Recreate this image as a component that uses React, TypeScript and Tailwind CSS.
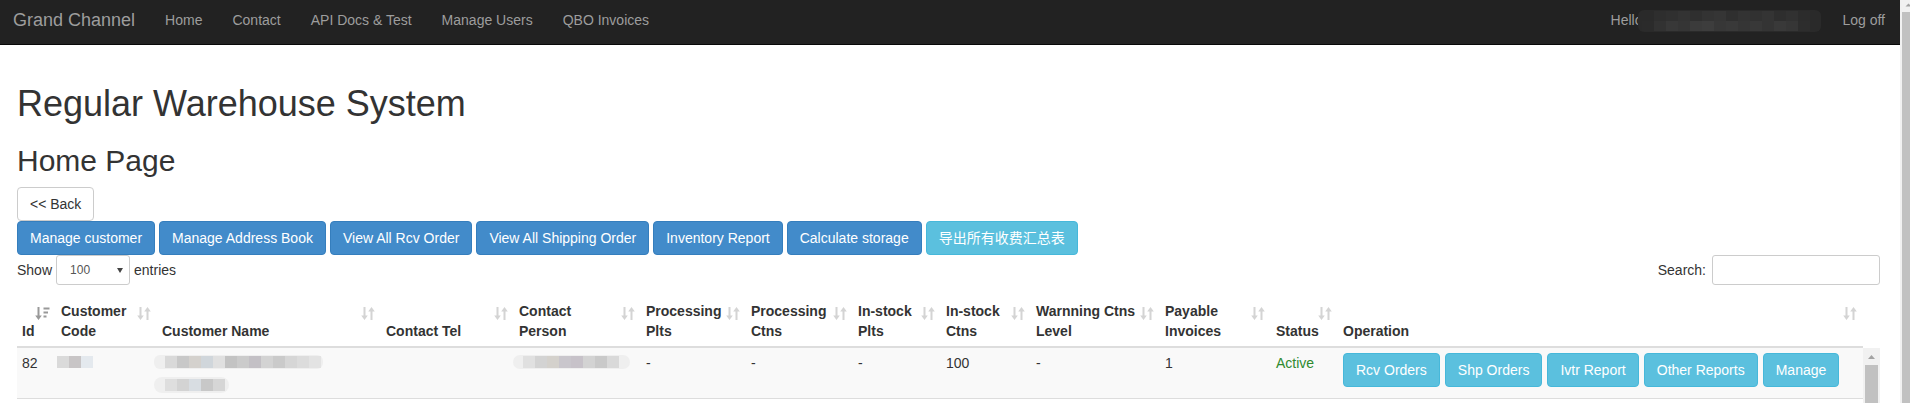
import React from "react";

const navLinks = ["Home", "Contact", "API Docs & Test", "Manage Users", "QBO Invoices"];

const topButtons: { label: string; info: boolean }[] = [
  { label: "Manage customer", info: false },
  { label: "Manage Address Book", info: false },
  { label: "View All Rcv Order", info: false },
  { label: "View All Shipping Order", info: false },
  { label: "Inventory Report", info: false },
  { label: "Calculate storage", info: false },
  { label: "导出所有收费汇总表", info: true },
];

const opButtons = ["Rcv Orders", "Shp Orders", "Ivtr Report", "Other Reports", "Manage"];

const primaryBtn =
  "h-[34px] px-[12px] rounded-[4px] border border-[#357ebd] bg-[#428bca] text-white whitespace-nowrap leading-[20px]";
const infoBtn =
  "h-[34px] px-[12px] rounded-[4px] border border-[#46b8da] bg-[#5bc0de] text-white whitespace-nowrap leading-[20px]";

function SortIcon() {
  return (
    <svg width="14" height="13" viewBox="0 0 14 13" className="absolute top-[11px] right-[6px]">
      <path d="M2.5 0h2v8.5h2.3L3.5 13 0.2 8.5h2.3z" fill="#d4d4d4" />
      <path d="M9.5 13h2V4.5h2.3L10.5 0 7.2 4.5h2.3z" fill="#d4d4d4" />
    </svg>
  );
}

function SortAscIcon() {
  return (
    <svg width="15" height="13" viewBox="0 0 15 13" className="absolute top-[11px] right-[6px]">
      <path d="M2.5 0h2v8.5h2.3L3.5 13 0.2 8.5h2.3z" fill="#999" />
      <rect x="8.5" y="0.5" width="6" height="2" fill="#999" />
      <rect x="8.5" y="4.5" width="4.5" height="2" fill="#999" />
      <rect x="8.5" y="8.5" width="3" height="2" fill="#999" />
    </svg>
  );
}

function Blocks({ cls, h = "h-[12px]" }: { cls: string[]; h?: string }) {
  return (
    <div className="flex">
      {cls.map((c, i) => (
        <div key={i} className={"w-[12px] " + h + " " + c} />
      ))}
    </div>
  );
}

const navBlurTop = [
  "bg-[#2a2a2a]", "bg-[#2e2e2e]", "bg-[#303030]", "bg-[#333333]", "bg-[#2f2f2f]", "bg-[#333333]",
  "bg-[#353535]", "bg-[#2f2f2f]", "bg-[#333333]", "bg-[#313131]", "bg-[#343434]", "bg-[#2e2e2e]",
  "bg-[#313131]", "bg-[#2c2c2c]", "bg-[#2a2a2a]",
];
const navBlurBottom = [
  "bg-[#2b2b2b]", "bg-[#323232]", "bg-[#383838]", "bg-[#353535]", "bg-[#3b3b3b]", "bg-[#3d3d3d]",
  "bg-[#373737]", "bg-[#393939]", "bg-[#353535]", "bg-[#383838]", "bg-[#343434]", "bg-[#393939]",
  "bg-[#363636]", "bg-[#2d2d2d]", "bg-[#2a2a2a]",
];

export default function App() {
  return (
    <div className="flex w-[1910px] h-[403px] overflow-hidden bg-white font-['Liberation_Sans','Noto_Sans_CJK_SC',sans-serif] text-[14px] leading-[20px] text-[#333]">
      <div className="w-[1900px] flex-none flex flex-col">
        {/* Navbar */}
        <nav className="h-[45px] flex-none bg-[#222] border-b border-[#080808] flex justify-between">
          <div className="flex items-start">
            <a className="pl-[13px] pr-[15px] pt-[10px] text-[18px] leading-[20px] text-[#9d9d9d]">Grand Channel</a>
            {navLinks.map((l) => (
              <a key={l} className="px-[15px] pt-[10px] text-[#9d9d9d]">
                {l}
              </a>
            ))}
          </div>
          <div className="flex items-start">
            <div className="flex items-start pt-[10px] text-[#9d9d9d]">
              <span>Hello</span>
              <div className="ml-[-4px] mr-[6px] w-[183px] h-[22px] rounded-[6px] bg-[#2a2a2a] flex flex-col justify-center pl-[4px] overflow-hidden">
                <Blocks cls={navBlurTop} h="h-[10px]" />
                <Blocks cls={navBlurBottom} h="h-[10px]" />
              </div>
            </div>
            <a className="px-[15px] pt-[10px] text-[#9d9d9d]">Log off</a>
          </div>
        </nav>

        {/* Main */}
        <main className="pl-[17px] pr-[20px] pt-[39px]">
          <h1 className="text-[36px] leading-[40px] font-normal">Regular Warehouse System</h1>
          <h2 className="mt-[20px] text-[30px] leading-[33px] font-normal">Home Page</h2>
          <div className="mt-[10px] flex">
            <button className="h-[34px] px-[12px] rounded-[4px] border border-[#ccc] bg-white text-[#333] leading-[20px]">
              &lt;&lt; Back
            </button>
          </div>
          <div className="flex gap-[4px]">
            {topButtons.map((b) => (
              <button key={b.label} className={b.info ? infoBtn : primaryBtn}>
                {b.label}
              </button>
            ))}
          </div>
          <div className="flex justify-between items-center h-[30px]">
            <div className="flex items-center">
              <span>Show</span>
              <div className="mx-[4px] w-[74px] h-[30px] border border-[#ccc] rounded-[3px] bg-white flex items-center justify-between pl-[13px] pr-[6px] text-[12px] text-[#555]">
                <span>100</span>
                <svg width="6" height="5" viewBox="0 0 6 5">
                  <path d="M0 0h6L3 5z" fill="#444" />
                </svg>
              </div>
              <span>entries</span>
            </div>
            <div className="flex items-center">
              <span>Search:</span>
              <div className="ml-[6px] w-[168px] h-[30px] border border-[#ccc] rounded-[3px] bg-white" />
            </div>
          </div>

          {/* Table head */}
          <div className="mt-[11px] w-[1863px]">
            <table className="table-fixed border-collapse w-[1846px]">
              <colgroup>
                <col className="w-[39px]" />
                <col className="w-[101px]" />
                <col className="w-[224px]" />
                <col className="w-[133px]" />
                <col className="w-[127px]" />
                <col className="w-[105px]" />
                <col className="w-[107px]" />
                <col className="w-[88px]" />
                <col className="w-[90px]" />
                <col className="w-[129px]" />
                <col className="w-[111px]" />
                <col className="w-[67px]" />
                <col className="w-[525px]" />
              </colgroup>
              <thead>
                <tr>
                  <th className="relative h-[50px] p-[5px] text-left align-bottom font-bold whitespace-nowrap border-b-2 border-[#ddd]">
                    Id
                    <SortAscIcon />
                  </th>
                  <th className="relative p-[5px] text-left align-bottom font-bold whitespace-nowrap border-b-2 border-[#ddd]">
                    Customer
                    <br />
                    Code
                    <SortIcon />
                  </th>
                  <th className="relative p-[5px] text-left align-bottom font-bold whitespace-nowrap border-b-2 border-[#ddd]">
                    Customer Name
                    <SortIcon />
                  </th>
                  <th className="relative p-[5px] text-left align-bottom font-bold whitespace-nowrap border-b-2 border-[#ddd]">
                    Contact Tel
                    <SortIcon />
                  </th>
                  <th className="relative p-[5px] text-left align-bottom font-bold whitespace-nowrap border-b-2 border-[#ddd]">
                    Contact
                    <br />
                    Person
                    <SortIcon />
                  </th>
                  <th className="relative p-[5px] text-left align-bottom font-bold whitespace-nowrap border-b-2 border-[#ddd]">
                    Processing
                    <br />
                    Plts
                    <SortIcon />
                  </th>
                  <th className="relative p-[5px] text-left align-bottom font-bold whitespace-nowrap border-b-2 border-[#ddd]">
                    Processing
                    <br />
                    Ctns
                    <SortIcon />
                  </th>
                  <th className="relative p-[5px] text-left align-bottom font-bold whitespace-nowrap border-b-2 border-[#ddd]">
                    In-stock
                    <br />
                    Plts
                    <SortIcon />
                  </th>
                  <th className="relative p-[5px] text-left align-bottom font-bold whitespace-nowrap border-b-2 border-[#ddd]">
                    In-stock
                    <br />
                    Ctns
                    <SortIcon />
                  </th>
                  <th className="relative p-[5px] text-left align-bottom font-bold whitespace-nowrap border-b-2 border-[#ddd]">
                    Warnning Ctns
                    <br />
                    Level
                    <SortIcon />
                  </th>
                  <th className="relative p-[5px] text-left align-bottom font-bold whitespace-nowrap border-b-2 border-[#ddd]">
                    Payable
                    <br />
                    Invoices
                    <SortIcon />
                  </th>
                  <th className="relative p-[5px] text-left align-bottom font-bold whitespace-nowrap border-b-2 border-[#ddd]">
                    Status
                    <SortIcon />
                  </th>
                  <th className="relative p-[5px] text-left align-bottom font-bold whitespace-nowrap border-b-2 border-[#ddd]">
                    Operation
                    <SortIcon />
                  </th>
                </tr>
              </thead>
            </table>
          </div>

          {/* Table body with scrollbar */}
          <div className="flex w-[1863px] h-[80px]">
            <div className="w-[1846px] flex-none">
              <table className="table-fixed border-collapse w-[1846px]">
                <colgroup>
                  <col className="w-[39px]" />
                  <col className="w-[101px]" />
                  <col className="w-[224px]" />
                  <col className="w-[133px]" />
                  <col className="w-[127px]" />
                  <col className="w-[105px]" />
                  <col className="w-[107px]" />
                  <col className="w-[88px]" />
                  <col className="w-[90px]" />
                  <col className="w-[129px]" />
                  <col className="w-[111px]" />
                  <col className="w-[67px]" />
                  <col className="w-[525px]" />
                </colgroup>
                <tbody>
                  <tr className="bg-[#f9f9f9] border-b border-[#ddd]">
                    <td className="p-[5px] align-top">82</td>
                    <td className="p-[5px] align-top">
                      <div className="ml-[-4px] mt-[3px] flex w-fit rounded-[4px] bg-[#eeeeee]">
                        <Blocks cls={["bg-[#dadada]", "bg-[#c8c5c6]", "bg-[#e4e9ee]"]} />
                      </div>
                    </td>
                    <td className="p-[5px] align-top">
                      <div className="ml-[-8px] h-[40px] flex flex-col">
                        <div className="mt-[2px] w-fit pl-[11px] pr-[2px] py-[1px] rounded-[6px] bg-[#efefef]">
                          <Blocks
                            cls={[
                              "bg-[#d9d9d9]", "bg-[#c8c8c8]", "bg-[#d4d1cd]", "bg-[#d0d6db]", "bg-[#e0e0e0]",
                              "bg-[#c3c3c3]", "bg-[#cbcbcb]", "bg-[#c3c0c5]", "bg-[#d3d3d3]", "bg-[#cacaca]",
                              "bg-[#d6d6d6]", "bg-[#dcdcdc]", "bg-[#e3e3e3]",
                            ]}
                          />
                        </div>
                        <div className="mt-[8px] w-fit pl-[11px] pr-[4px] py-[2px] rounded-[8px] bg-[#efefef]">
                          <Blocks cls={["bg-[#dedede]", "bg-[#d3d3d3]", "bg-[#d8dde2]", "bg-[#c8c8c8]", "bg-[#d6d6d6]"]} />
                        </div>
                      </div>
                    </td>
                    <td className="p-[5px] align-top"></td>
                    <td className="p-[5px] align-top">
                      <div className="ml-[-6px] mt-[2px] w-fit pl-[10px] pr-[11px] py-[1px] rounded-[7px] bg-[#efefef]">
                        <Blocks
                          cls={[
                            "bg-[#e0e0e0]", "bg-[#d3d3d3]", "bg-[#d4d1cc]", "bg-[#c9c6cc]",
                            "bg-[#c7c2c9]", "bg-[#d3d3d3]", "bg-[#c9c9c9]", "bg-[#d9d9d9]",
                          ]}
                        />
                      </div>
                    </td>
                    <td className="p-[5px] align-top">-</td>
                    <td className="p-[5px] align-top">-</td>
                    <td className="p-[5px] align-top">-</td>
                    <td className="p-[5px] align-top">100</td>
                    <td className="p-[5px] align-top">-</td>
                    <td className="p-[5px] align-top">1</td>
                    <td className="p-[5px] align-top text-[#2f8a2f]">Active</td>
                    <td className="p-[5px] align-top">
                      <div className="flex gap-[5px]">
                        {opButtons.map((b) => (
                          <button key={b} className={infoBtn}>
                            {b}
                          </button>
                        ))}
                      </div>
                    </td>
                  </tr>
                </tbody>
              </table>
            </div>
            <div className="w-[17px] flex-none bg-[#f1f1f1] flex flex-col items-center">
              <div className="h-[17px] w-[17px] flex items-center justify-center">
                <svg width="7" height="4" viewBox="0 0 7 4">
                  <path d="M0 4L3.5 0 7 4z" fill="#a3a3a3" />
                </svg>
              </div>
              <div className="w-[13px] flex-1 bg-[#c1c1c1]" />
            </div>
          </div>
        </main>
      </div>

      {/* Page scrollbar */}
      <div className="w-[10px] flex-none h-[403px] bg-[#f1f1f1] flex flex-col overflow-hidden">
        <svg width="10" height="12" viewBox="0 0 10 12" className="flex-none">
          <path d="M5.5 6.5L8.5 3.5 11.5 6.5z" fill="#a3a3a3" />
        </svg>
        <div className="ml-[2px] flex-1 bg-[#c1c1c1]" />
      </div>
    </div>
  );
}
